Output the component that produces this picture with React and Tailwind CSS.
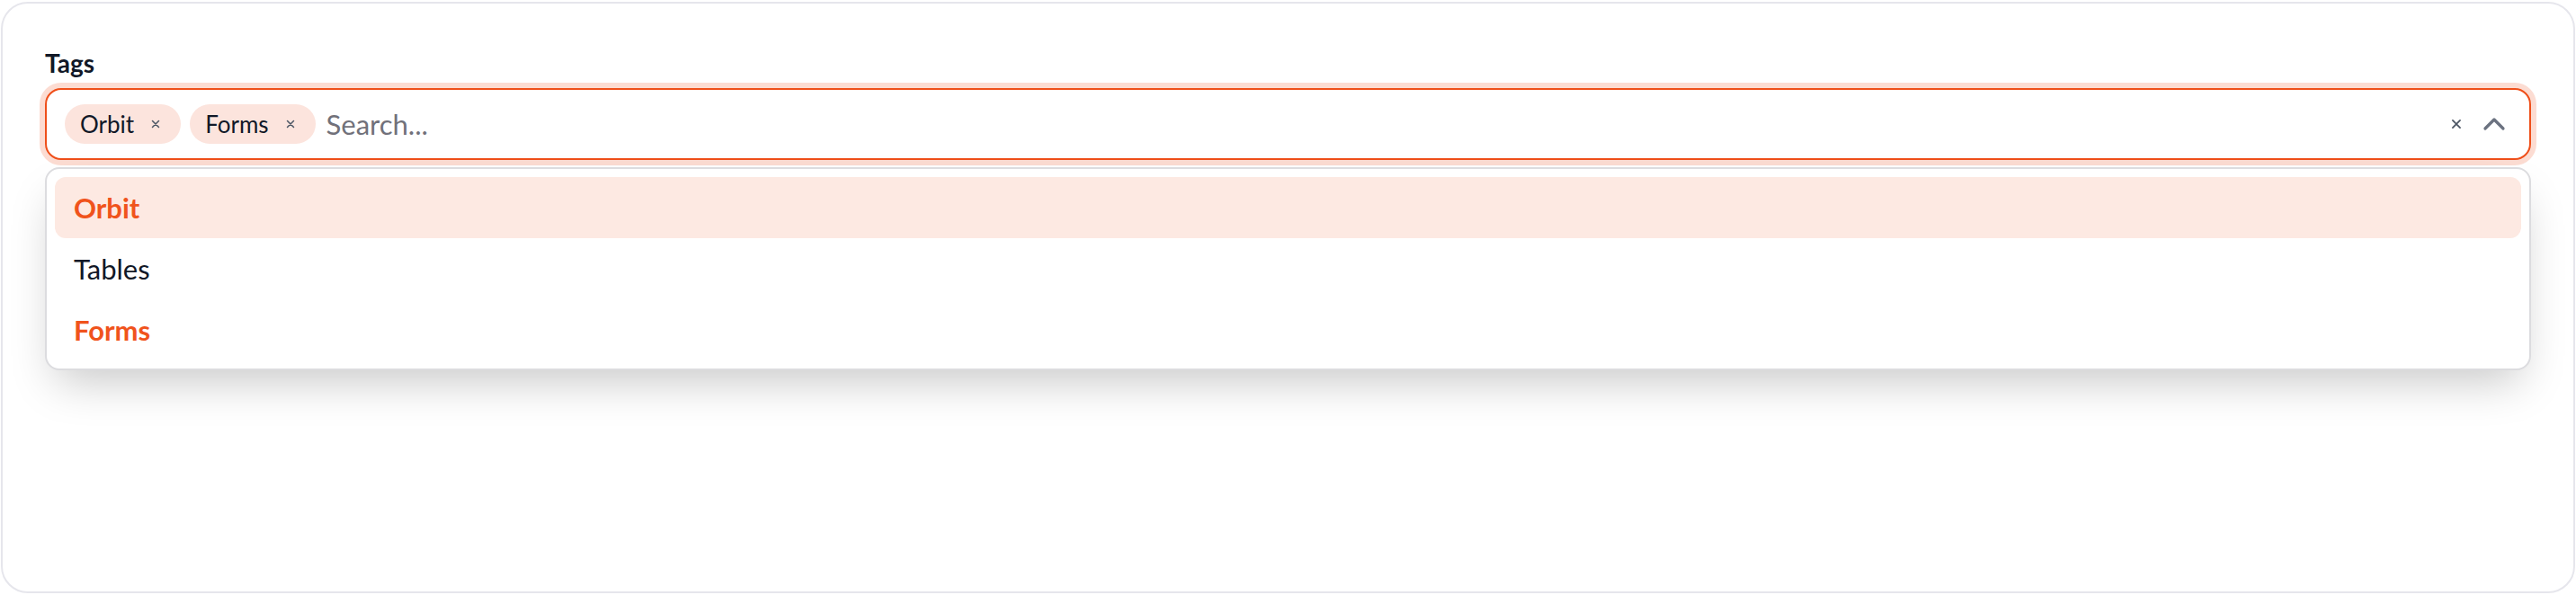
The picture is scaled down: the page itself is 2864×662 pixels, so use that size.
import React, { useState } from 'react';

const font = { fontFamily: 'Lato, "Noto Sans", sans-serif' };

function XIcon({ className }) {
  return (
    <svg viewBox="0 0 24 24" className={className} fill="none" stroke="currentColor" strokeWidth="3" strokeLinecap="round">
      <path d="M5 5l14 14M19 5L5 19" />
    </svg>
  );
}

function Chip({ label }) {
  return (
    <span className="flex h-[44px] items-center gap-[18px] rounded-full bg-[#fce4dd] pl-[17px] pr-[22px] text-[26px] text-[#111827]">
      {label}
      <XIcon className="h-[12px] w-[12px] text-[#4b5563]" />
    </span>
  );
}

export default function App() {
  const [selected] = useState(['Orbit', 'Forms']);
  const options = ['Orbit', 'Tables', 'Forms'];

  return (
    <div className="h-[662px] w-full bg-white px-[1px] pt-[2px]" style={font}>
      <div className="h-[658px] rounded-[30px] border-2 border-[#e6e6ec] bg-white px-[47px] pt-[46px]">
        <label className="mb-[8px] block text-[28px] font-bold leading-[40px] text-[#111827]">Tags</label>
        <div className="flex h-[80px] items-center rounded-[18px] border-2 border-[#ef4f1a] bg-white pl-[20px] pr-[24px] ring-[6px] ring-[#fcdcd2]">
          <div className="flex flex-1 items-center gap-[10px]">
            {selected.map((s) => (
              <Chip key={s} label={s} />
            ))}
            <span className="ml-[2px] text-[31px] text-[#71717a]">Search...</span>
          </div>
          <XIcon className="h-[14px] w-[14px] text-[#4b5563]" />
          <svg viewBox="0 0 24 24" className="ml-[20px] h-[30px] w-[30px] text-[#6b7280]" fill="none" stroke="currentColor" strokeWidth="2.6" strokeLinecap="round" strokeLinejoin="round">
            <path d="M4 16l8-8 8 8" />
          </svg>
        </div>
        <div className="mt-[8px] rounded-[16px] border-2 border-[#dcdcdf] bg-white p-[9px] shadow-[0_24px_50px_-12px_rgba(0,0,0,0.22)]">
          {options.map((o, i) => {
            const isSel = selected.includes(o);
            return (
              <div
                key={o}
                className={
                  'flex h-[68px] items-center rounded-[12px] px-[21px] text-[31px] ' +
                  (i === 0 ? 'bg-[#fde9e2] ' : '') +
                  (isSel ? 'font-bold text-[#f0531c]' : 'text-[#111827]')
                }
              >
                {o}
              </div>
            );
          })}
        </div>
      </div>
    </div>
  );
}
